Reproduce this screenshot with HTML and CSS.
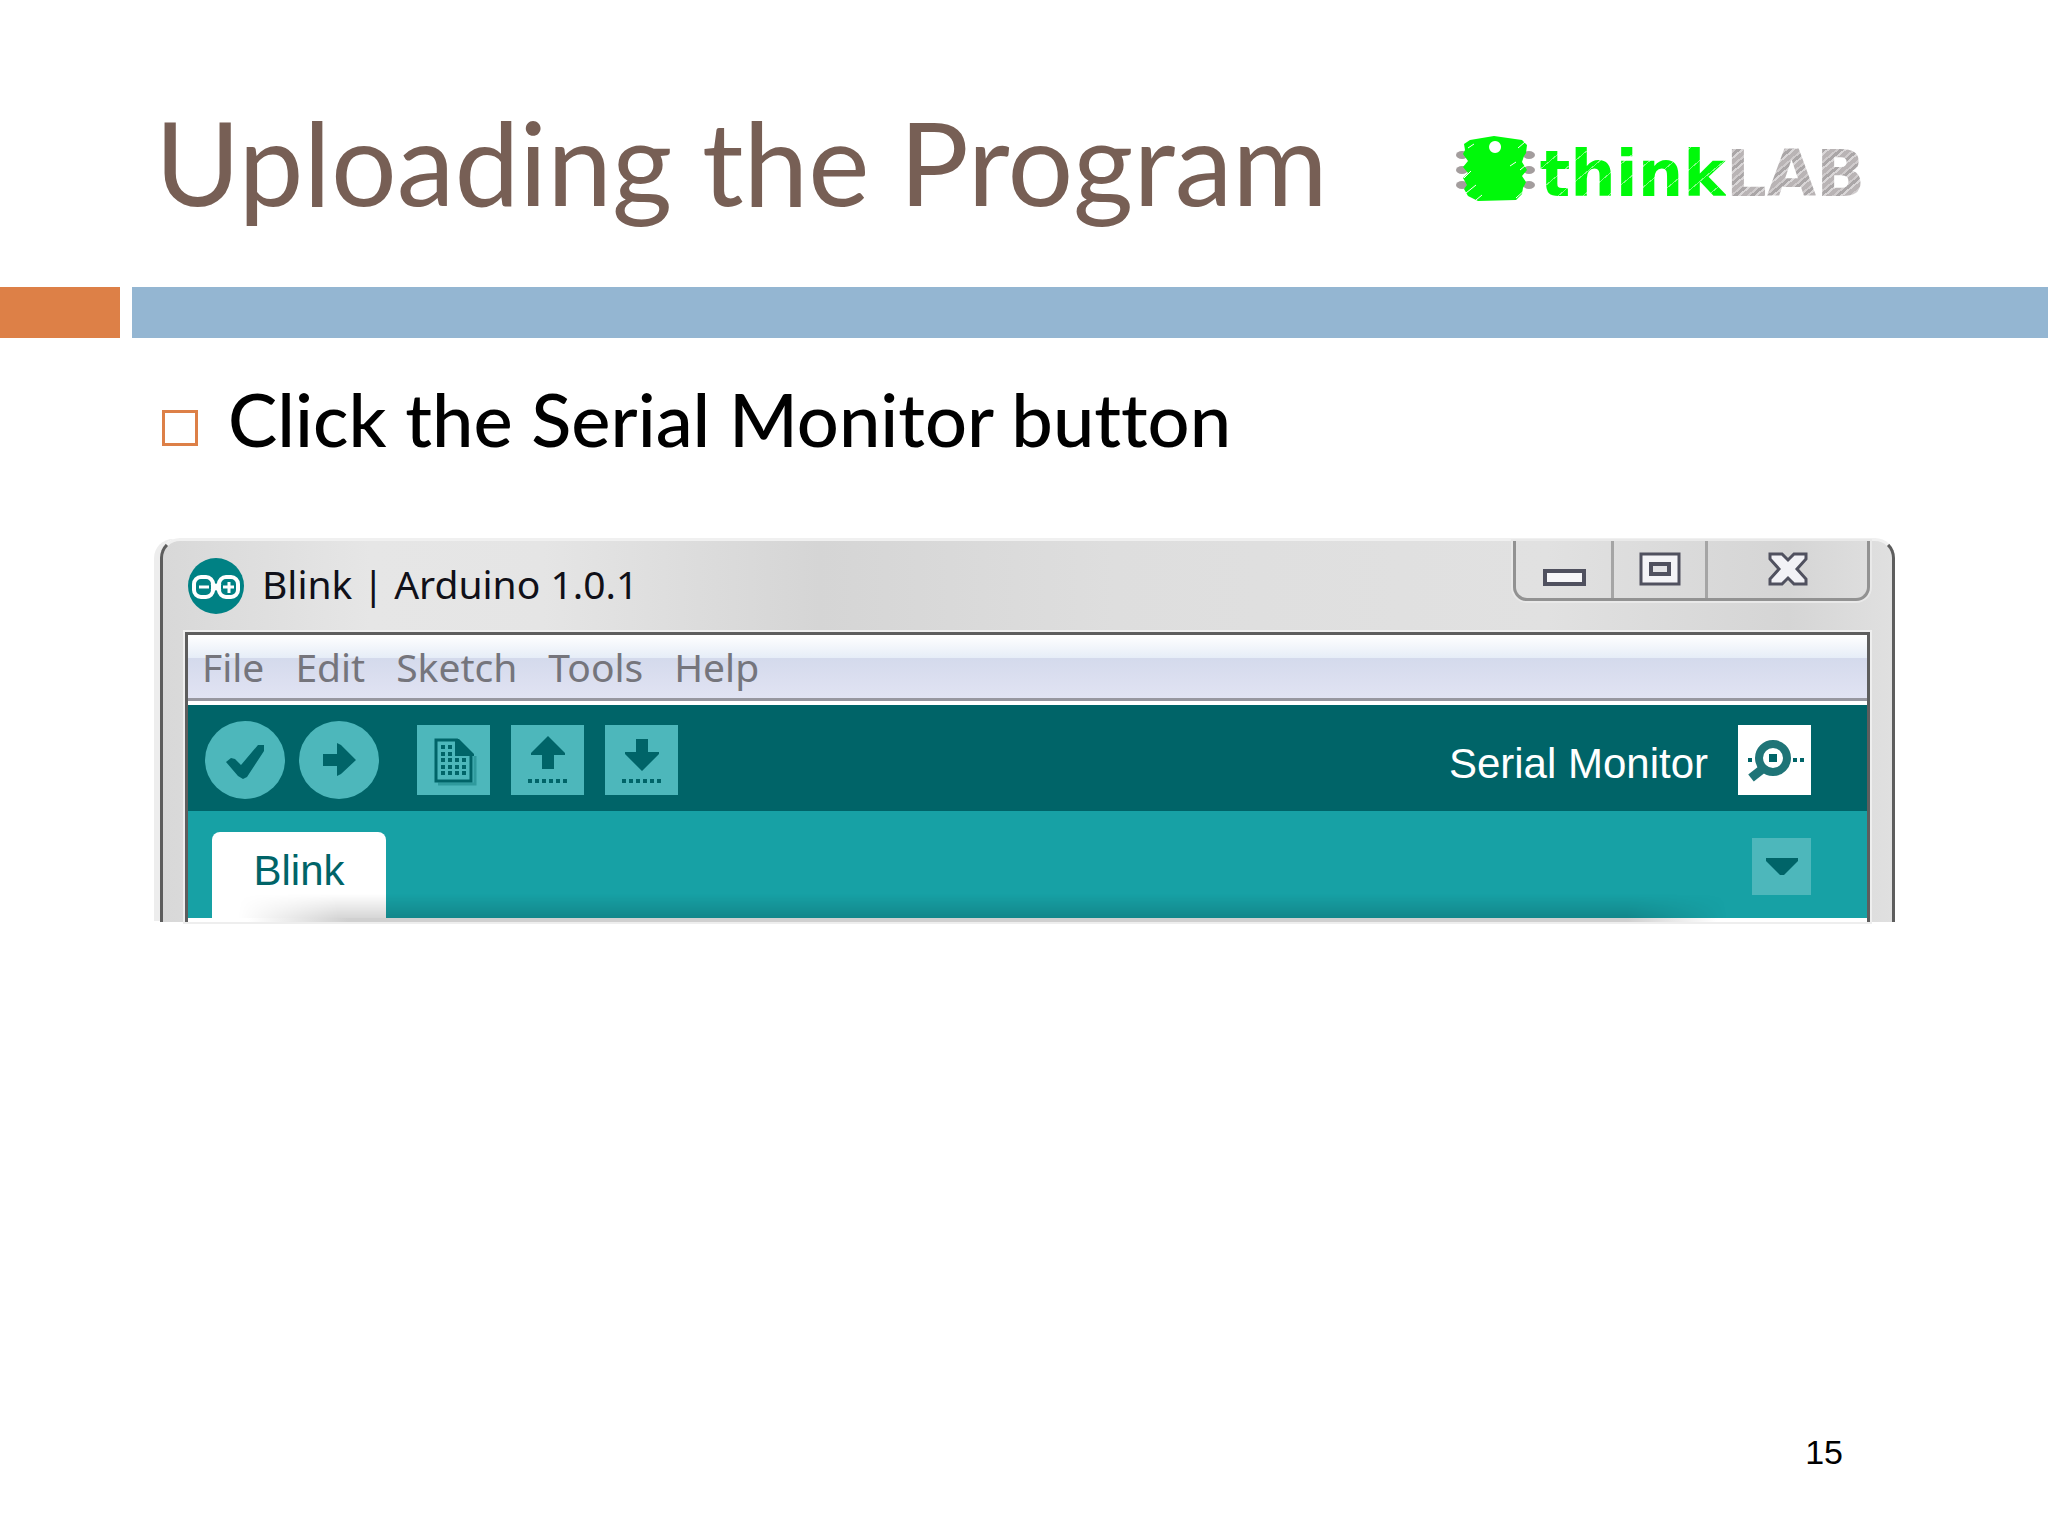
FILE: index.html
```html
<!DOCTYPE html>
<html lang="en">

<head>
    <meta charset="UTF-8">
    <meta name="viewport" content="width=device-width, initial-scale=1.0">
    <title>Uploading the Program</title>
    <link rel="stylesheet" href="styles.css">
</head>

<body>
    <div class="slide">
        <header class="slide-header">
            <h1>Uploading the Program</h1>
            <div class="logo">
                <svg width="80" height="66" viewBox="0 0 80 66" aria-hidden="true">
                    <g fill="#a39d9d">
                        <ellipse cx="6" cy="19" rx="6" ry="4" />
                        <ellipse cx="6" cy="34" rx="6" ry="4" />
                        <ellipse cx="6" cy="49" rx="6" ry="4" />
                        <ellipse cx="73" cy="19" rx="6" ry="4" />
                        <ellipse cx="73" cy="34" rx="6" ry="4" />
                        <ellipse cx="73" cy="49" rx="6" ry="4" />
                    </g>
                    <path fill="#00f90a" fill-rule="evenodd" d="M8 8L14 4L26 2L38 0L52 2L66 4L71 9L70 17L68 20L66 26L71 34L66 40L70 46L67 52L66 58L60 64L22 65L12 60L8 53L11 49L7 42L12 37L7 31L12 25L7 18L9 14zM39 5a6 6 0 1 0 .1 0z" />
                    <path stroke="#fff" stroke-width="1" d="M8 42l7-7M10 57l10-8M20 64l6-5M60 62l10-9M64 34l6-5M12 12l6-4M62 12l7-6M54 30l6-4" />
                </svg>
                <span class="logo-text"><span class="think">think</span><span class="lab">LAB</span></span>
            </div>
        </header>

        <div class="divider">
            <span class="divider-left"></span>
            <span class="divider-right"></span>
        </div>

        <main class="content">
            <ul class="points">
                <li>Click the Serial Monitor button</li>
            </ul>

            <div class="window">
                <div class="titlebar">
                    <svg class="app-icon" width="56" height="56" viewBox="0 0 56 56" aria-hidden="true">
                        <circle cx="28" cy="28" r="28" fill="#008184" />
                        <g fill="none" stroke="#fff" stroke-width="4">
                            <rect x="6" y="19" width="19" height="20" rx="7" />
                            <rect x="31" y="19" width="19" height="20" rx="7" />
                            <path d="M24 25l8 8M24 33l8-8" />
                            <path d="M11 29h10M35 29h11M41 24v11" stroke-width="3" />
                        </g>
                    </svg>
                    <span class="window-title">Blink | Arduino 1.0.1</span>
                    <div class="window-controls">
                        <button type="button" class="minimize" aria-label="Minimize">
                            <svg width="44" height="36" viewBox="0 0 44 36">
                                <rect x="3" y="20" width="39" height="13" fill="#f7f7f9" stroke="#50515f" stroke-width="4" />
                            </svg>
                        </button>
                        <button type="button" class="maximize" aria-label="Maximize">
                            <svg width="44" height="36" viewBox="0 0 44 36">
                                <rect x="3" y="3" width="38" height="30" fill="#f4f4f7" stroke="#50515f" stroke-width="3" />
                                <rect x="13" y="13" width="18" height="10" fill="#e3e3e6" stroke="#50515f" stroke-width="4" />
                            </svg>
                        </button>
                        <button type="button" class="close" aria-label="Close">
                            <svg width="44" height="36" viewBox="0 0 44 36">
                                <path d="M4 3h12l6 6 6-6h12v5l-9 10 9 10v5H28l-6-6-6 6H4v-5l9-10-9-10z" fill="#f2f2f6" stroke="#50515f" stroke-width="3" />
                            </svg>
                        </button>
                    </div>
                </div>

                <div class="client">
                    <nav class="menu">
                        <button type="button">File</button>
                        <button type="button">Edit</button>
                        <button type="button">Sketch</button>
                        <button type="button">Tools</button>
                        <button type="button">Help</button>
                    </nav>

                    <div class="toolbar">
                        <button type="button" class="tool round" aria-label="Verify">
                            <svg width="80" height="78" viewBox="0 0 80 78">
                                <path d="M21 41l5-4 4 1 6 6 17-20h6v6L42 56l-4 2-5-3z" fill="#006468" />
                            </svg>
                        </button>
                        <button type="button" class="tool round" aria-label="Upload">
                            <svg width="80" height="78" viewBox="0 0 80 78">
                                <path d="M24 33h14V22l4 2 15 15-15 14-4 2V45H24z" fill="#006468" />
                            </svg>
                        </button>
                        <div class="file-tools">
                            <button type="button" class="tool" aria-label="New">
                                <svg width="73" height="70" viewBox="0 0 73 70">
                                    <path d="M21 59h37V31" fill="none" stroke="#2f9a9d" stroke-width="3" />
                                    <path d="M19 15H40L54 30V56H19z" fill="none" stroke="#006468" stroke-width="3" />
                                    <path d="M38 14h4l15 15v2H38z" fill="#006468" />
                                    <g stroke="#006468" stroke-width="4" stroke-dasharray="4 3">
                                        <path d="M24 22h11M24 29h11M24 35h25M24 42h25M24 48h25" />
                                    </g>
                                </svg>
                            </button>
                            <button type="button" class="tool" aria-label="Open">
                                <svg width="73" height="70" viewBox="0 0 73 70">
                                    <path d="M37 11l17 17v2H43v14H31V30H20v-2z" fill="#006468" />
                                    <path d="M17 56h40" stroke="#006468" stroke-width="4" stroke-dasharray="4 3" />
                                </svg>
                            </button>
                            <button type="button" class="tool" aria-label="Save">
                                <svg width="73" height="70" viewBox="0 0 73 70">
                                    <path d="M31 14h12v13h11v2L37 46 20 29v-2h11z" fill="#006468" />
                                    <path d="M17 56h40" stroke="#006468" stroke-width="4" stroke-dasharray="4 3" />
                                </svg>
                            </button>
                        </div>
                        <label class="serial-label" for="serial-monitor">Serial Monitor</label>
                        <button type="button" class="tool serial" id="serial-monitor">
                            <svg width="73" height="70" viewBox="0 0 73 70">
                                <circle cx="35" cy="33" r="14" fill="none" stroke="#1f7477" stroke-width="8" />
                                <rect x="31" y="29" width="8" height="8" fill="#006468" />
                                <path d="M27 42l-14 11" fill="none" stroke="#1f7477" stroke-width="9" />
                                <path d="M10 35h4M55 35h4M62 35h4" stroke="#006468" stroke-width="4" />
                            </svg>
                        </button>
                    </div>

                    <div class="tabs">
                        <button type="button" class="tab">Blink</button>
                        <button type="button" class="tab-menu" aria-label="Tab menu">
                            <svg width="32" height="18" viewBox="0 0 32 18">
                                <path d="M0 0h32v3L18 17h-4L0 3z" fill="#006468" />
                            </svg>
                        </button>
                    </div>
                    <div class="editor-edge"></div>
                </div>
            </div>
        </main>

        <footer class="page-number">15</footer>
    </div>
</body>

</html>
```

FILE: styles.css
```css
:root {
    --title-color: #775f55;
    --orange: #dd8047;
    --blue: #94b6d2;

    --teal-dark: #006468;
    --teal: #17a1a5;
    --teal-light: #4db7bb;
    --frame-line: #5d5d5d;
}

*,
*::before,
*::after {
    box-sizing: border-box;
}

body {
    margin: 0;
    background: white;
}

button {
    appearance: none;
    border: 0;
    padding: 0;
    margin: 0;
    background: none;
    font: inherit;
    color: inherit;
    cursor: pointer;
}

svg {
    display: block;
}

.slide {
    min-height: 100vh;
    display: flex;
    flex-direction: column;
}

.slide-header {
    height: 287px;
    padding: 42px 183px 0 155px;
    display: flex;
    justify-content: space-between;
    align-items: flex-start;
}

h1 {
    margin: 0;
    font-family: Lato, sans-serif;
    font-size: 116px;
    font-weight: 400;
    line-height: 240px;
    color: var(--title-color);
    white-space: nowrap;
}

.logo {
    display: flex;
    gap: 4px;
    padding-top: 94px;
}

.logo-text {
    display: flex;
    align-items: baseline;
    font-family: "DejaVu Sans", sans-serif;
    font-weight: 700;
    font-size: 64px;
    line-height: 76px;
}

.think,
.lab {
    color: transparent;
    -webkit-background-clip: text;
    background-clip: text;
}

.think {
    background-image: repeating-linear-gradient(140deg, #00f90a 0 9px, #7dfa80 9px 10px, #00f90a 10px 16px);
}

.lab {
    background-image: repeating-linear-gradient(140deg, #b9b4b5 0 4px, #cfcbcc 4px 6px, #aaa6a7 6px 9px, #d9d6d7 9px 11px);
}

.divider {
    display: flex;
    gap: 12px;
    height: 51px;
}

.divider-left {
    width: 120px;
    background: var(--orange);
}

.divider-right {
    flex-grow: 1;
    background: var(--blue);
}

.content {
    padding: 36px 153px 0;
}

.points {
    list-style: none;
    margin: 0;
    padding: 0 0 0 9px;
    font-family: Lato, sans-serif;
    font-size: 74px;
    font-weight: 500;
    font-variant-ligatures: none;
    line-height: 90px;
    color: black;
}

.points li {
    display: flex;
    align-items: center;
    gap: 30px;
}

.points li::before {
    content: "";
    width: 36px;
    height: 36px;
    margin-top: 18px;
    border: 3px solid var(--orange);
}

.window {
    margin-top: 74px;
    margin-left: 7px;
    padding: 0 22px;
    border: 3px solid var(--frame-line);
    border-top-color: #f0f0f0;
    border-bottom: 0;
    border-radius: 20px 20px 0 0;
    box-shadow: -7px 0 0 -1px #ededed;
    background: linear-gradient(90deg, #d8d8d8, #e6e6e6 12%, #e5e5e5 22%, #d5d5d5 38%, #dedede 55%, #e1e1e1 80%, #d5d5d5 94%, #e0e0e0);
}

.titlebar {
    height: 91px;
    display: flex;
    align-items: flex-start;
    padding-left: 3px;
}

.app-icon {
    margin-top: 17px;
}

.window-title {
    margin-left: 18px;
    font-family: "Noto Sans", sans-serif;
    font-size: 39px;
    line-height: 86px;
    color: #101018;
    white-space: nowrap;
}

.window-controls {
    margin-left: auto;
    display: flex;
    height: 60px;
    border: 3px solid #929292;
    border-top: 0;
    border-radius: 0 0 14px 14px;
    box-shadow: 0 0 0 2px #e9e9e9;
}

.window-controls button {
    display: flex;
    justify-content: center;
    padding-top: 10px;
}

.window-controls .minimize {
    width: 95px;
}

.window-controls .maximize {
    width: 97px;
    border: solid #a5a5a5;
    border-width: 0 3px;
}

.window-controls .close {
    width: 159px;
}

.client {
    border: 3px solid var(--frame-line);
    border-bottom: 0;
    background: white;
    outline: 2px solid #eeeeee;
}

.menu {
    display: flex;
    gap: 31px;
    height: 66px;
    padding-left: 14px;
    border-bottom: 3px solid #9797a0;
    background: linear-gradient(#ffffff, #e6edf7 36%, #d4daec 37%, #e1e3f3);
    font-family: "Noto Sans", sans-serif;
    font-size: 39px;
    line-height: 63px;
    color: #75757c;
}

.toolbar {
    height: 106px;
    margin-top: 4px;
    padding: 4px 56px 0 17px;
    display: flex;
    align-items: center;
    background: var(--teal-dark);
}

.tool {
    width: 73px;
    height: 70px;
    background: var(--teal-light);
}

.tool.round {
    width: 80px;
    height: 78px;
    margin-right: 14px;
    border-radius: 50%;
}

.file-tools {
    display: flex;
    gap: 21px;
    margin-left: 24px;
}

.serial-label {
    margin-left: auto;
    padding-top: 8px;
    font-family: "Liberation Sans", sans-serif;
    font-size: 42px;
    line-height: 50px;
    color: white;
}

.tool.serial {
    margin-left: 30px;
    background: white;
}

.tabs {
    position: relative;
    height: 107px;
    padding: 21px 56px 0 24px;
    display: flex;
    justify-content: space-between;
    align-items: flex-start;
    background: var(--teal);
}

/* shadow of the editor over the bottom of the tab row */
.tabs::after {
    content: "";
    position: absolute;
    left: 50px;
    right: 140px;
    bottom: 0;
    height: 24px;
    background: linear-gradient(transparent, rgba(0, 0, 0, 0.16));
    -webkit-mask-image: linear-gradient(90deg, transparent, black 100px, black calc(100% - 100px), transparent);
    mask-image: linear-gradient(90deg, transparent, black 100px, black calc(100% - 100px), transparent);
    pointer-events: none;
}

.tab {
    width: 174px;
    height: 86px;
    padding-bottom: 8px;
    border-radius: 8px 8px 0 0;
    background: white;
    font-family: "Liberation Sans", sans-serif;
    font-size: 42px;
    color: var(--teal-dark);
}

.tab-menu {
    width: 59px;
    height: 57px;
    margin-top: 6px;
    display: flex;
    justify-content: center;
    align-items: center;
    background: var(--teal-light);
}

.editor-edge {
    height: 4px;
    background: linear-gradient(90deg, white 60px, #d0d0d0 160px, #d0d0d0 calc(100% - 240px), white calc(100% - 150px));
}

.page-number {
    margin-top: auto;
    padding: 0 205px 64px 0;
    text-align: right;
    font-family: "Liberation Sans", sans-serif;
    font-size: 34px;
    line-height: 40px;
    color: black;
}
```
